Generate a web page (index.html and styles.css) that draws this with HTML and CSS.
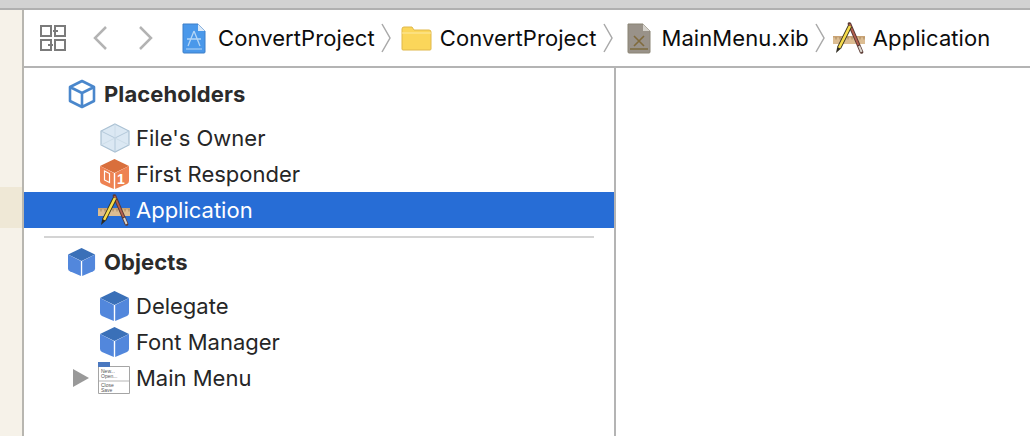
FILE: index.html
```html
<!DOCTYPE html>
<html lang="en">
<head>
<meta charset="utf-8">
<title>MainMenu.xib</title>
<link rel="stylesheet" href="styles.css">
</head>
<body>
<svg class="defs" width="0" height="0" aria-hidden="true">
  <defs>
    <symbol id="hammer" viewBox="0 0 32 32">
      <path d="M0 14h32v8H0z" fill="#dcbd92"/>
      <path d="M0 14h32v1.500H0z" fill="#c9a273"/>
      <path d="M3 15v2.500M7 15v2.500M11 15v2.500M15 15v2.500M19 15v2.500M23 15v2.500M27 15v2.500M31 15v2.500" stroke="#9a7a52" stroke-width=".8"/>
      <path d="M16.500 2 L28.500 30" stroke="#5a3a34" stroke-width="3.600" stroke-linecap="round"/>
      <path d="M16.500 2 L25.500 23" stroke="#b5604f" stroke-width="1.800"/>
      <path d="M26 24l2.600 6" stroke="#d9d4cc" stroke-width="2"/>
      <path d="M17 4 L6 26" stroke="#35301c" stroke-width="4.400"/>
      <path d="M17 4 L6 26" stroke="#f7dc4c" stroke-width="2.600"/>
      <path d="M4.200 25l3.600 1.800-4.800 4.200z" fill="#2d2a20"/>
    </symbol>
    <symbol id="solid-cube" viewBox="0 0 30 32">
      <path d="M14.500 1 29 8 14.500 15 0 8z" fill="#3a70b8"/>
      <path d="M0 8 13.800 15V31L2 26Q0 25 0 23z" fill="#5287dc"/>
      <path d="M29 8 15.200 15V31L27 26Q29 25 29 23z" fill="#5287dc"/>
    </symbol>
  </defs>
</svg>
<div class="window">
  <div class="titlebar"></div>
  <div class="workspace">
    <div class="gutter"><div class="gutter-mark"></div></div>
    <div class="editor">
      <nav class="crumbs">
        <svg class="grid-icon" width="26" height="26" viewBox="0 0 26 26">
          <g fill="none" stroke="#7b7b7b" stroke-width="2">
            <path d="M1 1h10v10H1z"/><path d="M15 1h10v10H15z"/><path d="M1 15h10v10H1z"/><path d="M15 15h10v10H15z"/>
            <path d="M13 6h5M8 20h5"/>
          </g>
        </svg>
        <svg class="nav-icon nav-back" width="16" height="26" viewBox="0 0 16 26"><path d="M14 2 3 13l11 11" fill="none" stroke="#b3b3b3" stroke-width="2.500"/></svg>
        <svg class="nav-icon nav-forward" width="16" height="26" viewBox="0 0 16 26"><path d="M2 2l11 11L2 24" fill="none" stroke="#b3b3b3" stroke-width="2.500"/></svg>
        <svg class="crumb-icon project-icon" width="24" height="31" viewBox="0 0 24 31">
          <path d="M1 1h15l7 7v21a1 1 0 0 1-1 1H2a1 1 0 0 1-1-1z" fill="#4a98ea" stroke="#3d7fc8"/>
          <path d="M16 1v7h7z" fill="#dbe9f7"/>
          <path d="M4 26h16" stroke="#b5d6f6" stroke-width="1"/>
          <path d="M12 8 6 23M12 8l6 15M5 16h14" fill="none" stroke="#b5d6f6" stroke-width="1.300"/>
        </svg>
        <span class="crumb-text crumb-project">ConvertProject</span>
        <svg class="sep sep-first" width="11" height="30" viewBox="0 0 11 30"><path d="M1 1l8 14-8 14" fill="none" stroke="#a9a9a9" stroke-width="1.500"/></svg>
        <svg class="crumb-icon folder-icon" width="31" height="25" viewBox="0 0 31 25">
          <path d="M1 3a2 2 0 0 1 2-2h8l2 3h15a2 2 0 0 1 2 2v17a1 1 0 0 1-1 1H2a1 1 0 0 1-1-1z" fill="#fbd65a" stroke="#e0b84a"/>
          <path d="M1 7h29" stroke="#fdeaa0"/>
        </svg>
        <span class="crumb-text crumb-folder">ConvertProject</span>
        <svg class="sep" width="11" height="30" viewBox="0 0 11 30"><path d="M1 1l8 14-8 14" fill="none" stroke="#a9a9a9" stroke-width="1.500"/></svg>
        <svg class="crumb-icon xib-icon" width="24" height="31" viewBox="0 0 24 31">
          <path d="M1 1h15l7 7v21a1 1 0 0 1-1 1H2a1 1 0 0 1-1-1z" fill="#999289" stroke="#8a8474"/>
          <path d="M16 1v7h7z" fill="#d5d2cc"/>
          <path d="M3 26h18" stroke="#7c6a3e" stroke-width="1.500"/>
          <path d="M7 13l10 10M17 13 7 23" stroke="#806a3c" stroke-width="1.600"/>
        </svg>
        <span class="crumb-text crumb-xib">MainMenu.xib</span>
        <svg class="sep sep-last" width="11" height="30" viewBox="0 0 11 30"><path d="M1 1l8 14-8 14" fill="none" stroke="#a9a9a9" stroke-width="1.500"/></svg>
        <svg class="crumb-icon app-icon" width="32" height="32"><use href="#hammer"/></svg>
        <span class="crumb-text">Application</span>
      </nav>
      <div class="content">
        <div class="outline">
          <section class="group">
            <h2 class="group-title">
              <svg class="group-icon" width="28" height="30" viewBox="0 0 27 30">
                <path d="M13.500 2 25.500 8V22L13.500 28 1.500 22V8zM1.500 8 13.500 14 25.500 8M13.500 14V28" fill="none" stroke="#4a87cc" stroke-width="2.600" stroke-linejoin="round"/>
              </svg>
              Placeholders
            </h2>
            <div class="row">
              <svg class="row-icon" width="30" height="30" viewBox="0 0 30 30">
                <path d="M15 1 29 8V22L15 29 1 22V8z" fill="#dbe8f3" stroke="#a9c0d3" stroke-width="1.200"/>
                <path d="M1 8 15 15 29 8M15 15V29" fill="none" stroke="#b4c9da" stroke-width="1"/>
                <path d="M15 1V15M1 22 15 15 29 22" fill="none" stroke="#c8d8e5" stroke-width=".8"/>
              </svg>
              <span>File's Owner</span>
            </div>
            <div class="row">
              <svg class="row-icon" width="30" height="32" viewBox="0 0 30 32">
                <path d="M14.500 1 29 8 14.500 15 0 8z" fill="#d96f3c"/>
                <path d="M0 8 13.800 15V31L2 26Q0 25 0 23z" fill="#ee8252"/>
                <path d="M29 8 15.200 15V31L27 26Q29 25 29 23z" fill="#ee8252"/>
                <path d="M4.500 13l5 2.500v9l-5-2.500z" fill="none" stroke="#fff" stroke-width="1.200"/>
                <text class="cube-digit" x="21" y="26">1</text>
              </svg>
              <span>First Responder</span>
            </div>
            <div class="row row-selected">
              <svg class="row-icon" width="32" height="32"><use href="#hammer"/></svg>
              <span>Application</span>
            </div>
          </section>
          <hr class="divider">
          <section class="group group-objects">
            <h2 class="group-title">
              <svg class="group-icon" width="28" height="30"><use href="#solid-cube"/></svg>
              Objects
            </h2>
            <div class="row">
              <svg class="row-icon" width="30" height="32"><use href="#solid-cube"/></svg>
              <span>Delegate</span>
            </div>
            <div class="row">
              <svg class="row-icon" width="30" height="32"><use href="#solid-cube"/></svg>
              <span>Font Manager</span>
            </div>
            <div class="row">
              <svg class="disclosure" width="16" height="18" viewBox="0 0 16 18"><path d="M0 0 16 9 0 18z" fill="#999"/></svg>
              <svg class="row-icon menu-icon" width="32" height="32" viewBox="0 0 32 32">
                <path d="M.5 4.500h31v27H.5z" fill="#fff" stroke="#a5a5a5"/>
                <path d="M0 0h12v5H0z" fill="#4a78c0"/>
                <text class="menu-mini" x="3" y="11">New...</text>
                <text class="menu-mini" x="3" y="16">Open...</text>
                <path d="M1 19h30" stroke="#b5b5b5"/>
                <text class="menu-mini" x="3" y="25">Close</text>
                <text class="menu-mini" x="3" y="30">Save</text>
              </svg>
              <span>Main Menu</span>
            </div>
          </section>
        </div>
        <div class="canvas"></div>
      </div>
    </div>
  </div>
</div>
</body>
</html>
```
FILE: styles.css
```css
* { box-sizing: border-box; }
html, body { margin: 0; height: 100%; }
body { background: #fff; font-family: Inter, "Noto Sans", "Liberation Sans", sans-serif; overflow: hidden; }
.defs { display: block; height: 0; }
.window { display: flex; flex-direction: column; width: 1030px; height: 436px; }
.titlebar { height: 10px; flex: none; background: #d2d2d2; border-bottom: 2px solid #b0b0b0; }
.workspace { flex: 1; display: flex; min-height: 0; }
.gutter { width: 24px; flex: none; background: #f6f2e9; border-right: 2px solid #b8b6b0; padding-top: 177px; }
.gutter-mark { height: 41px; background: #efe8d6; }
.editor { flex: 1; display: flex; flex-direction: column; min-width: 0; }
.crumbs { height: 58px; flex: none; display: flex; align-items: center; border-bottom: 2px solid #b4b4b4; color: #0c0c0c; padding-left: 16px; }
.crumb-text { font-size: 22px; line-height: 30px; white-space: nowrap; letter-spacing: .08px; }
.grid-icon { flex: none; }
.crumb-icon { flex: none; }
.nav-back { margin-left: 26px; }
.nav-forward { margin-left: 30px; }
.project-icon { margin-left: 28px; }
.crumb-project { margin-left: 12px; }
.sep { margin-left: 7px; flex: none; }
.sep-first { margin-left: 6px; }
.sep-last { margin-left: 6px; }
.folder-icon { margin-left: 9px; }
.crumb-folder { margin-left: 8px; }
.xib-icon { margin-left: 13px; }
.crumb-xib { margin-left: 10px; }
.app-icon { margin-left: 7px; margin-right: 8px; }
.content { flex: 1; display: flex; min-height: 0; }
.outline { width: 592px; flex: none; border-right: 2px solid #b4b4b4; }
.canvas { flex: 1; }
.group { padding-top: 8px; }
.group-objects { padding-top: 6px; }
.group-title { margin: 0 0 8px; height: 36px; display: flex; align-items: center; font-size: 22px; font-weight: 700; color: #2b2b2b; padding-left: 44px; gap: 8px; letter-spacing: .08px; }
.group-icon { flex: none; }
.row { height: 36px; display: flex; align-items: center; font-size: 22px; color: #262626; padding-left: 76px; position: relative; }
.row span { margin-left: 6px; }
.row-selected { background: #276dd6; color: #fff; }
.row-selected .row-icon { margin-left: -2px; }
.row-icon { flex: none; }
.disclosure { position: absolute; left: 49px; top: 9px; }
.menu-icon { margin-left: -2px; }
.cube-digit { font-family: "Liberation Sans", sans-serif; font-size: 14px; font-weight: 700; fill: #fff; text-anchor: middle; }
.menu-mini { font-family: "Liberation Sans", sans-serif; font-size: 5px; fill: #555; }
.divider { margin: 8px 20px 0; height: 2px; border: 0; background: #d4d4d4; }
```
